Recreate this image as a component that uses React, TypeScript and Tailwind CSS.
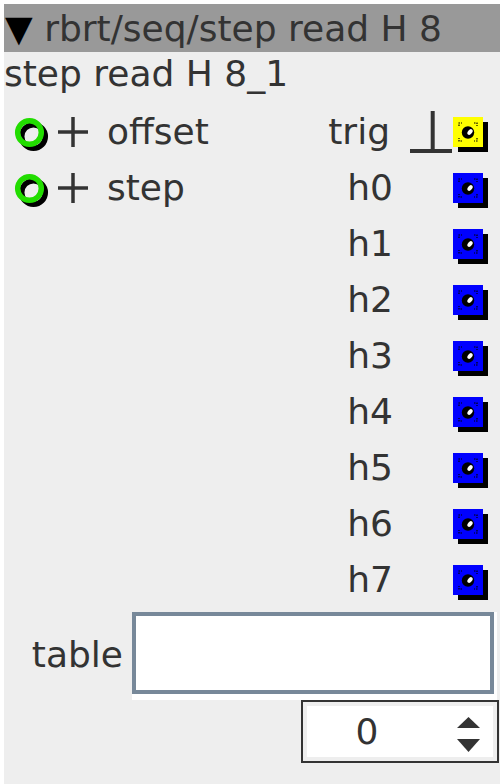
import React from "react";

const font = { fontFamily: '"DejaVu Sans", "Liberation Sans", sans-serif' };

function Ring() {
  return (
    <svg width="36" height="36" viewBox="0 0 36 36">
      <circle cx="19.5" cy="19.5" r="11.8" fill="none" stroke="#000" strokeWidth="5.5" />
      <circle cx="15.5" cy="15.5" r="11.8" fill="none" stroke="#22dd00" strokeWidth="5.5" />
    </svg>
  );
}

function Plus() {
  return (
    <svg width="32" height="32" viewBox="0 0 32 32">
      <line x1="1" y1="16" x2="31" y2="16" stroke="#333" strokeWidth="3.5" />
      <line x1="16" y1="1" x2="16" y2="31" stroke="#333" strokeWidth="3.5" />
    </svg>
  );
}

function Square({ color }: { color: string }) {
  return (
    <svg width="36" height="36" viewBox="0 0 36 36">
      <rect x="5" y="5" width="30" height="30" fill="#000" />
      <rect x="0" y="0" width="30" height="30" fill={color} />
      <path d="M6 9 V6 H9 M21 6 H24 V9 M24 21 V24 H21 M9 24 H6 V21" stroke="#000" strokeWidth="1.2" fill="none" strokeDasharray="1.5 1" />
      <circle cx="15" cy="15.5" r="6.2" fill="#000" />
      <ellipse cx="17" cy="15" rx="3.2" ry="2.1" transform="rotate(-50 17 15)" fill="#fff" />
    </svg>
  );
}

function Tee() {
  return (
    <svg width="43" height="56" viewBox="0 0 43 56">
      <line x1="22.7" y1="7" x2="22.7" y2="47" stroke="#333" strokeWidth="4" />
      <line x1="0" y1="47" x2="42" y2="47" stroke="#333" strokeWidth="4" />
    </svg>
  );
}

export default function App() {
  const outs = ["h0", "h1", "h2", "h3", "h4", "h5", "h6", "h7"];
  return (
    <div className="bg-white w-[504px] h-[784px] pt-[4px] pl-[4px]" style={font}>
      <div className="w-[496px] h-[780px] bg-[#eeeeee] text-[#333333] flex flex-col">
        <div className="h-[48px] bg-[#999999] flex items-center text-[36px] leading-[42px] whitespace-nowrap pl-[1px] pt-[2px]">
          <span className="text-black">▼</span>
          <span>&nbsp;rbrt/seq/step read H 8</span>
        </div>
        <div className="h-[52px] text-[36px] leading-[42px] whitespace-nowrap pt-[1px]">
          step read H 8_1
        </div>
        <div className="flex">
          <div className="flex-1 flex flex-col">
            {["offset", "step"].map((n) => (
              <div key={n} className="h-[56px] flex items-start text-[36px] leading-[42px]">
                <div className="ml-[10px] mt-[13px] w-[36px] h-[36px]"><Ring /></div>
                <div className="ml-[7px] mt-[12px] w-[32px] h-[32px]"><Plus /></div>
                <span className="ml-[18px] mt-[7px]">{n}</span>
              </div>
            ))}
          </div>
          <div className="w-[200px] flex flex-col">
            <div className="h-[56px] flex items-start text-[36px] leading-[42px]">
              <span className="w-[90px] text-right mt-[7px]">trig</span>
              <div className="ml-[20px] w-[43px] h-[56px]"><Tee /></div>
              <div className="w-[36px] h-[36px] mt-[13px]"><Square color="#ffff00" /></div>
            </div>
            {outs.map((o) => (
              <div key={o} className="h-[56px] flex items-start text-[36px] leading-[42px]">
                <span className="w-[93px] text-right mt-[7px]">{o}</span>
                <div className="ml-[17px] w-[43px] h-[56px]" />
                <div className="w-[36px] h-[36px] mt-[13px]"><Square color="#0000ff" /></div>
              </div>
            ))}
          </div>
        </div>
        <div className="flex items-start mt-[4px]">
          <span className="w-[119px] text-right text-[36px] leading-[42px] mt-[22px]">table</span>
          <div className="ml-[9px] border-r-[3px] border-b-[6px] border-white">
            <div className="w-[362px] h-[82px] bg-white border-[4px] border-[#778899]" />
          </div>
        </div>
        <div className="flex justify-end mr-[1px]">
          <div className="w-[198px] h-[63px] border-[2px] border-[#333333] bg-[#eeeeee] p-[4px]">
            <div className="w-full h-full bg-white flex items-stretch">
              <span className="w-[120px] text-center text-[36px] leading-[42px] self-center">0</span>
              <svg width="24" height="51" viewBox="0 0 24 51" className="ml-[30px]">
                <polygon points="0,22 11.5,11 23,22" fill="#333" />
                <polygon points="0,33 23,33 11.5,46" fill="#333" />
              </svg>
            </div>
          </div>
        </div>
      </div>
    </div>
  );
}
